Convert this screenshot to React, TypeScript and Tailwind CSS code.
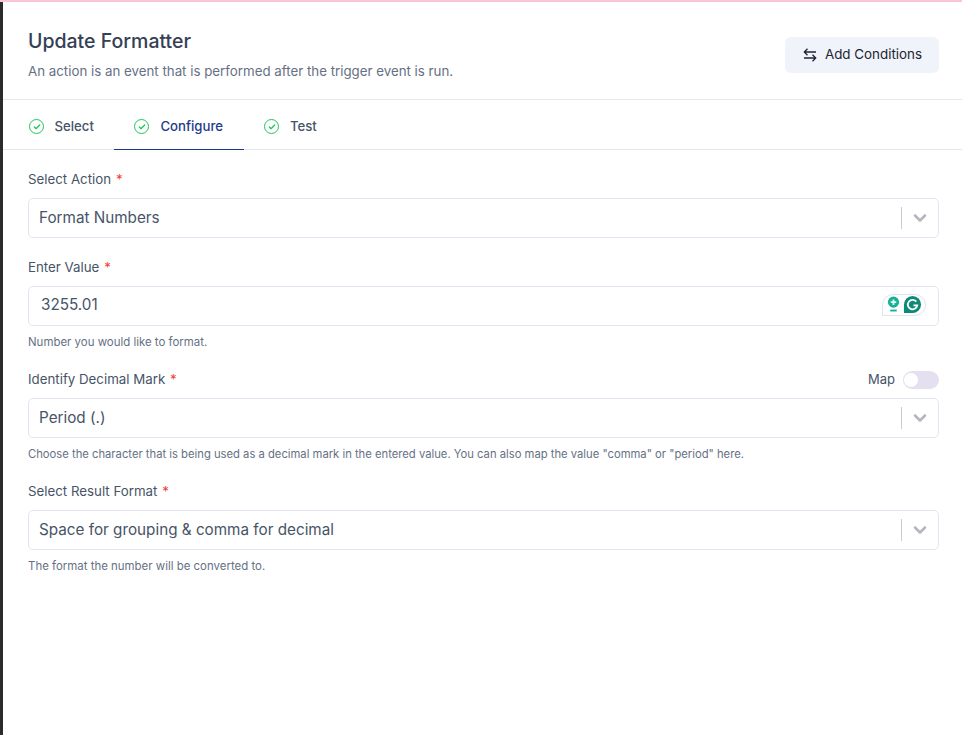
import { ChevronDown, Check } from "lucide-react"
import type React from "react"

function Label({ children }: { children: React.ReactNode }) {
  return (
    <label className="block text-[13.3px] leading-[18px] font-[430] text-[#475467]">
      {children} <span className="ml-[1px] text-[#f04438]">*</span>
    </label>
  )
}

function SelectBox({ value }: { value: string }) {
  return (
    <div className="mt-[10px] flex h-10 items-center rounded-[5px] border border-[#e3e5f1] bg-white pl-[10px]">
      <span className="flex-1 text-[15.25px] text-[#475467]">{value}</span>
      <div className="h-[22px] w-px bg-[#cccccc]" />
      <div className="flex w-[36px] items-center justify-center">
        <ChevronDown className="h-5 w-5 text-[#b3b6c0]" strokeWidth={3} />
      </div>
    </div>
  )
}

function Help({ children, long }: { children: React.ReactNode; long?: boolean }) {
  return (
    <p className={long ? "mt-[8px] text-[11.24px] leading-[16px] text-[#667085]" : "mt-[8px] text-[11.45px] leading-[16px] text-[#667085]"}>
      {children}
    </p>
  )
}

function Tab({ label, active }: { label: string; active?: boolean }) {
  return (
    <div
      className={
        active
          ? "-mb-px flex h-[50px] w-[130px] items-center gap-[11px] border-b border-[#1f3a8a] pl-[20px] pt-[4px]"
          : "-mb-px flex h-[50px] items-center gap-[10.5px] pl-[20px] pr-[20.5px] pt-[3px]"
      }
    >
      <span className="flex h-[15px] w-[15px] items-center justify-center rounded-full border-[1.5px] border-[#22c55e]">
        <Check className="h-[8px] w-[8px] text-[#22c55e]" strokeWidth={4} />
      </span>
      <span className={active ? "text-[13.2px] font-medium text-[#1e3a8a]" : "text-[13.2px] font-medium text-[#475467]"}>
        {label}
      </span>
    </div>
  )
}

export default function App() {
  return (
    <div className="flex h-[735px] flex-col bg-white font-['Inter',sans-serif]">
      <div className="h-[2px] bg-[#f9c6d4]" />
      <div className="flex flex-1">
        <div className="w-[3px] bg-[#2b2b2b]" />
        <div className="flex-1">
          <div className="flex h-[98px] items-start justify-between border-b border-[#e5e7ef] pl-[25px] pr-[23px] pt-[25px]">
            <div>
              <h1 className="text-[19.5px] leading-[28px] font-medium text-[#344054]">Update Formatter</h1>
              <p className="mt-[6px] text-[13.3px] leading-[20px] text-[#667085]">
                An action is an event that is performed after the trigger event is run.
              </p>
            </div>
            <button className="mt-[10px] flex h-[36px] w-[154px] items-center justify-center gap-[7px] rounded-[6px] bg-[#f0f3f9] pb-[1px] text-[13.4px] font-[430] text-[#1d2433]">
              <svg viewBox="0 0 16 16" className="h-[16px] w-[16px]" fill="none" stroke="currentColor" strokeWidth="1.3">
                <path d="M14 5H2.5M5.5 1.8 2.3 5l3.2 3.2M2 11h11.5M10.5 7.8l3.2 3.2-3.2 3.2" />
              </svg>
              Add Conditions
            </button>
          </div>
          <div className="flex h-[50px] border-b border-[#e5e7ef] pl-[6px]">
            <Tab label="Select" />
            <Tab label="Configure" active />
            <Tab label="Test" />
          </div>
          <div className="pl-[25px] pr-[23px] pt-[20px]">
            <Label>Select Action</Label>
            <SelectBox value="Format Numbers" />

            <div className="mt-[20px]">
              <Label>Enter Value</Label>
              <div className="mt-[10px] flex h-10 items-center justify-between rounded-[5px] border border-[#e3e5f1] pl-[12px] pr-[12px]">
                <span className="pb-[1px] text-[15.25px] text-[#475467]">3255.01</span>
                <div className="mb-[3px] flex h-[22px] w-[44px] items-center justify-center gap-[3px] rounded-[11px] rounded-bl-none border border-[#dfe3ee] bg-white">
                  <svg viewBox="0 0 14 18" className="h-[17px] w-[13px]">
                    <circle cx="7" cy="6.5" r="6" fill="#15b096" />
                    <path d="M7 3.5v6M4 6.5h6" stroke="#e6f7f4" strokeWidth="2" />
                    <rect x="3.5" y="14.5" width="7" height="2" fill="#15b096" />
                  </svg>
                  <svg viewBox="0 0 20 20" className="h-[19px] w-[19px]">
                    <path d="M10 1a9 9 0 1 1 0 18H1v-9a9 9 0 0 1 9-9z" fill="#0c8a76" />
                    <path d="M14 7a5 5 0 1 0 1 4h-4" fill="none" stroke="#fff" strokeWidth="1.9" />
                  </svg>
                </div>
              </div>
              <Help>Number you would like to format.</Help>
            </div>

            <div className="mt-[20px]">
              <div className="flex h-[18px] items-center justify-between">
                <Label>Identify Decimal Mark</Label>
                <div className="flex items-center gap-[8px]">
                  <span className="text-[13px] leading-[18px] font-normal text-[#475467]">Map</span>
                  <div className="mt-[1px] -mb-[1px] flex h-[18px] w-[36px] items-center rounded-full bg-[#e4e0ef] pl-[1px]">
                    <div className="h-[14px] w-[14px] rounded-full bg-white" />
                  </div>
                </div>
              </div>
              <SelectBox value="Period (.)" />
              <Help long>
                Choose the character that is being used as a decimal mark in the entered value. You can also map the value "comma" or "period" here.
              </Help>
            </div>

            <div className="mt-[20px]">
              <Label>Select Result Format</Label>
              <SelectBox value="Space for grouping & comma for decimal" />
              <Help>The format the number will be converted to.</Help>
            </div>
          </div>
        </div>
      </div>
    </div>
  )
}
